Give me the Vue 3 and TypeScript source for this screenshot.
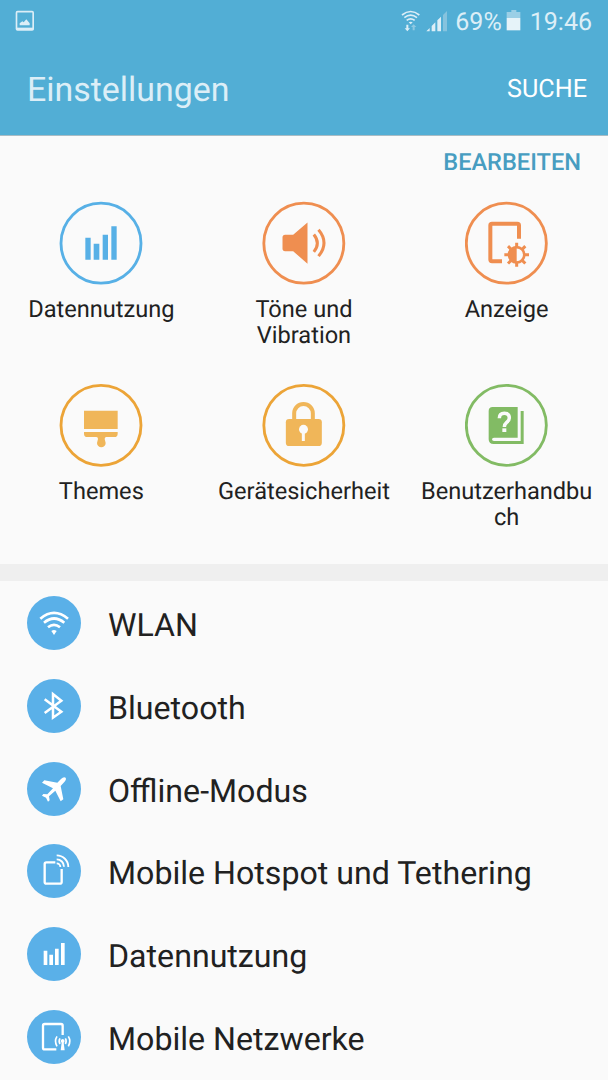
<script setup lang="ts">
interface QuickItem {
  label: string
  icon: string
  color: string
  box: string
  cx: number
  cy: number
}

interface ListItem {
  label: string
  icon: string
  box: string
}

const quickItems: QuickItem[] = [
  { label: 'Datennutzung', icon: 'data', color: '#57b0e6', box: '28 18.5 252 252', cx: 154, cy: 145 },
  { label: 'Töne und Vibration', icon: 'sound', color: '#ef8e50', box: '30.5 18.5 252 252', cx: 156, cy: 145 },
  { label: 'Anzeige', icon: 'display', color: '#ef8e50', box: '31 18.5 252 252', cx: 155, cy: 145 },
  { label: 'Themes', icon: 'themes', color: '#eca437', box: '28 15 252 252', cx: 154, cy: 142 },
  { label: 'Gerätesicherheit', icon: 'lock', color: '#eca437', box: '30.5 15 252 252', cx: 156, cy: 142 },
  { label: 'Benutzerhandbuch', icon: 'manual', color: '#82bb64', box: '31 15 252 252', cx: 155, cy: 142 },
]

const listItems: ListItem[] = [
  { label: 'WLAN', icon: 'wifi', box: '81 138 162 162' },
  { label: 'Bluetooth', icon: 'bluetooth', box: '81 387 162 162' },
  { label: 'Offline-Modus', icon: 'plane', box: '81 634 162 162' },
  { label: 'Mobile Hotspot und Tethering', icon: 'hotspot', box: '81 42 162 162' },
  { label: 'Datennutzung', icon: 'data', box: '81 291 162 162' },
  { label: 'Mobile Netzwerke', icon: 'network', box: '81 539 162 162' },
]
</script>

<template>
  <main class="screen">
    <header class="top">
      <div class="status">
        <svg class="shot" viewBox="45 28 60 66" width="20" height="22">
          <rect x="49.5" y="33" width="50" height="55" rx="3" fill="none" stroke="#dceef7" stroke-width="5" />
          <path d="M49 81h51v7H49z" fill="#dceef7" />
          <path d="M59 74v-6l8-6 4 3 8-9 10 12v6z" fill="#dceef7" />
        </svg>
        <div class="status-right">
          <svg viewBox="60 24 150 72" width="50" height="24">
            <g fill="none" stroke="#dceef7" stroke-width="5">
              <path d="M66 42q26-21 52 0M73 50q19-15 38 0M80 58q12-9 24 0" />
            </g>
            <path d="M86 64q6-4 12 0l-6 6z" fill="#dceef7" />
            <path d="M79 71h6v11h5l-8 9-8-9h5z" fill="#dceef7" />
            <path d="M98 88h6V78h5l-8-8-8 8h5z" fill="#8fc9e2" />
            <path d="M139 91l10-10v10zM155 75l11-11v27h-11zM172 58l11-11v44h-11z" fill="#dceef7" />
            <path d="M189 42l12-12v61h-12z" fill="#86c3de" />
          </svg>
          <span class="percent">69%</span>
          <svg class="battery" viewBox="380 30 45 63" width="15" height="21">
            <path d="M382 36h14v-6h15v6h12v18h-41z" fill="#9bcfe6" />
            <path d="M382 54h41v37h-41z" fill="#e6f3f9" />
          </svg>
          <span class="clock">19:46</span>
        </div>
      </div>
      <div class="titlebar">
        <h1>Einstellungen</h1>
        <button class="search">SUCHE</button>
      </div>
    </header>

    <section class="quick">
      <div class="edit-row"><button class="edit">BEARBEITEN</button></div>
      <div class="grid">
        <div v-for="item in quickItems" :key="item.label" class="tile">
          <svg class="tile-icon" :viewBox="item.box">
            <circle :cx="item.cx" :cy="item.cy" r="120" fill="none" :stroke="item.color" stroke-width="8.5" />
            <path v-if="item.icon === 'data'" d="M107 129h16v66h-16zM132 147h17v48h-17zM159 120h16v75h-16zM185 94h16v101h-16z" fill="#57b0e6" />
            <g v-else-if="item.icon === 'sound'">
              <path d="M100 120h24l43-37v124l-43-38h-24q-8 0-8-8v-33q0-8 8-8z" fill="#ef8e50" />
              <path d="M186 119q21 26 0 52M200 105q33 39 0 79" fill="none" stroke="#ef8e50" stroke-width="9" />
            </g>
            <g v-else-if="item.icon === 'display'">
              <path d="M193 132V92q0-5-5-5h-76q-5 0-5 5v102q0 5 5 5h30" fill="none" stroke="#ef8e50" stroke-width="12" />
              <circle cx="186" cy="180" r="23" fill="none" stroke="#ef8e50" stroke-width="8" />
              <path d="M186 156a24 24 0 0 0 0 48z" fill="#ef8e50" />
              <path d="M186 144v15M186 201v15M149 180h15M208 180h15M160 154l11 11M201 195l11 11M160 206l11-11M201 165l11-11" fill="none" stroke="#ef8e50" stroke-width="9" />
            </g>
            <path v-else-if="item.icon === 'themes'" d="M103 98h101v55H103zM103 162h101v5q0 10-10 10h-24q-5 0-5 6l3 12a13 13 0 1 1-26 0l3-12q0-6-5-6h-27q-10 0-10-10z" fill="#f0b659" />
            <g v-else-if="item.icon === 'lock'">
              <path d="M127 126v-20a28 28 0 0 1 56 0v20" fill="none" stroke="#f0b659" stroke-width="12" />
              <rect x="102" y="123" width="108" height="81" rx="10" fill="#f0b659" />
              <circle cx="155" cy="154" r="13.500" fill="#fafafa" />
              <path d="M150 162h9v27h-9z" fill="#fafafa" />
            </g>
            <g v-else>
              <path d="M114 87h75v92h-71q-6 0-6 5t6 5h80V99h9v99h-90q-15 0-15-14V99q0-12 12-12z" fill="#82bb64" />
              <path d="M134 121q0-15 15-15t15 14q0 7-8 13-7 6-7 14" fill="none" stroke="#fafafa" stroke-width="10.500" />
              <path d="M143 151h12v11h-12z" fill="#fafafa" />
            </g>
          </svg>
          <span class="tile-label">{{ item.label }}</span>
        </div>
      </div>
    </section>

    <ul class="list">
      <li v-for="item in listItems" :key="item.label" class="row">
        <svg class="row-icon" :viewBox="item.box">
          <g v-if="item.icon === 'wifi'" fill="none" stroke="#fff" stroke-width="8">
            <path d="M121 206q41-35 83 0M132 218q30-25 61 0M144 232q18-15 36 0" />
            <path d="M154 243q8-6 16 0l-8 12z" fill="#fff" stroke="none" />
          </g>
          <path v-else-if="item.icon === 'bluetooth'" d="M134 448l50 37-25 18v-71l25 20-50 37" fill="none" stroke="#fff" stroke-width="7.500" />
          <path v-else-if="item.icon === 'plane'" d="M197 681q3 5-4 13l-11 12 8 40-8 6-16-32-19 17 2 12-5 4-6-12-12-6 4-5 12 1 17-18-33-17 7-7 39 7 11-11q8-8 14-4z" fill="#fff" />
          <g v-else-if="item.icon === 'hotspot'" fill="none" stroke="#fff" stroke-width="7">
            <path d="M166 97h-27q-5 0-5 5v54q0 5 5 5h41q5 0 5-5v-39" />
            <path d="M170 76a35 35 0 0 1 35 35M170 88a22 22 0 0 1 22 22M170 100a11 11 0 0 1 11 11" stroke-width="5.500" />
          </g>
          <path v-else-if="item.icon === 'data'" d="M131 362h11v43h-11zM148 374h11v31h-11zM165 356h11v49h-11zM183 339h11v66h-11z" fill="#fff" />
          <g v-else fill="none" stroke="#fff" stroke-width="7">
            <path d="M188 614v-28q0-5-5-5h-49q-5 0-5 5v66q0 5 5 5h35" />
            <path d="M171 618q-9 14 0 30M180 624q-5 8 0 17M205 618q9 14 0 30M196 624q5 8 0 17" stroke-width="5" />
            <path d="M188 626a6 6 0 0 1 3 11l3 23h-12l3-23a6 6 0 0 1 3-11z" fill="#fff" stroke="none" />
          </g>
        </svg>
        <span class="row-label">{{ item.label }}</span>
      </li>
    </ul>
  </main>
</template>

<style>
html, body { margin: 0; background: #fafafa; overflow: hidden; }
</style>

<style scoped>
.screen {
  box-sizing: border-box;
  width: 608px;
  height: 1080px;
  overflow: hidden;
  background: #fafafa;
  color: #212121;
  font-family: Roboto, sans-serif;
  text-rendering: geometricPrecision;
}
button { border: 0; padding: 0; background: none; font-family: inherit; text-rendering: inherit; }
.top { box-sizing: border-box; height: 136px; background: #52aed5; border-bottom: 1px solid #a9bcc4; }
.status { display: flex; justify-content: space-between; height: 42px; padding: 0 16px 0 15px; color: #dceef7; font-size: 25px; }
.shot { margin-top: 10px; }
.status-right { display: flex; align-items: flex-start; line-height: 45px; }
.status-right svg { margin-top: 9px; }
.percent { margin-left: 5px; }
.status-right .battery { margin: 10px 9px 0 4px; }
.titlebar { display: flex; justify-content: space-between; padding: 0 21px 0 27px; height: 93px; line-height: 97.500px; }
h1 { margin: 0; font-size: 33.900px; font-weight: 400; color: #dceef7; }
.search { height: 95px; font-size: 25.200px; color: #fff; }
.quick { box-sizing: border-box; height: 428px; }
.edit-row { display: flex; justify-content: flex-end; height: 65.300px; padding-right: 27px; }
.edit { height: 51px; font-size: 23.600px; font-weight: 500; color: #479dc1; }
.grid { display: grid; grid-template-columns: repeat(3, 1fr); grid-auto-rows: 182px; }
.tile { display: flex; flex-direction: column; align-items: center; }
.tile-icon { width: 84px; height: 84px; flex: none; }
.tile-label { width: 174px; margin-top: 11px; font-size: 23.600px; line-height: 26px; text-align: center; overflow-wrap: anywhere; }
.list { list-style: none; margin: 0; padding: 15px 0 0; border-top: 17px solid #efefef; }
.row { display: flex; height: 82.750px; padding-left: 27px; }
.row-icon { width: 54px; height: 54px; flex: none; border-radius: 50%; background: #5ab0e8; }
.row-label { margin-left: 27px; font-size: 32.150px; line-height: 58.500px; white-space: nowrap; }
</style>
